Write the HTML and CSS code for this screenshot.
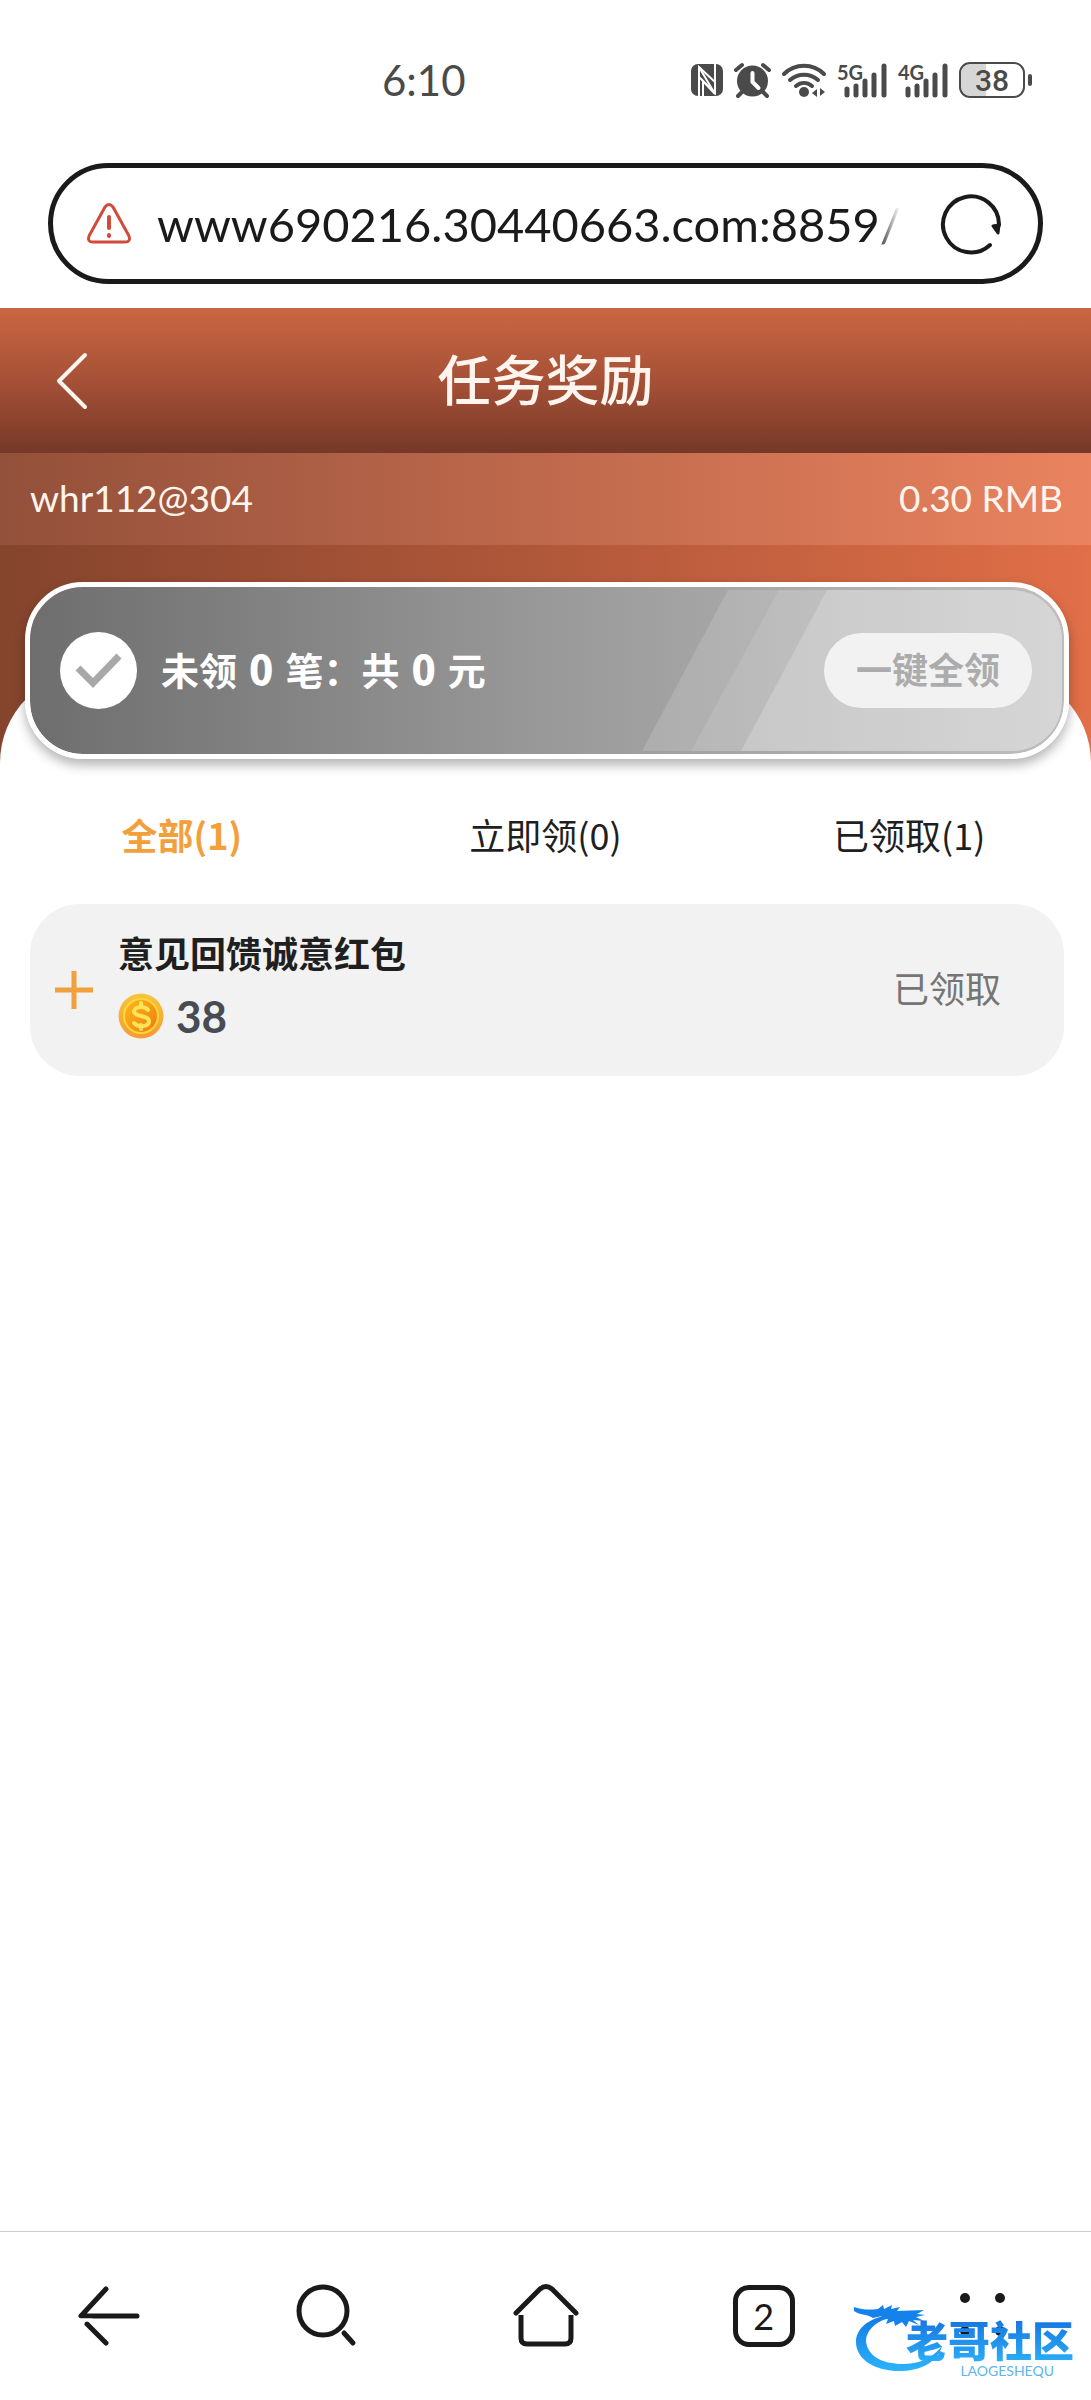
FILE: index.html
```html
<!DOCTYPE html>
<html lang="zh-CN">
<head>
    <meta charset="UTF-8">
    <meta name="viewport" content="width=device-width, initial-scale=1.0">
    <title>任务奖励</title>
    <link rel="stylesheet" href="styles.css">
</head>
<body>
    <div class="status-bar">
        <span class="clock">6:10</span>
        <div class="status-icons">
            <svg width="32" height="36" viewBox="0 0 32 36">
                <rect x="0" y="2" width="32" height="32" rx="7" fill="#4a4a4a"/>
                <path d="M8 34V5l16 15M24 2v29L8 15" fill="none" stroke="#fff" stroke-width="2"/>
                <path d="M8 5l16 27M12 34V19l12 13" fill="none" stroke="#fff" stroke-width="2"/>
            </svg>
            <svg width="37" height="36" viewBox="0 0 37 36">
                <circle cx="18.5" cy="19" r="15.5" fill="#4a4a4a"/>
                <path d="M2 8l6-5M35 8l-6-5M8 30l-4 4M29 30l4 4" stroke="#4a4a4a" stroke-width="4" stroke-linecap="round"/>
                <path d="M18.5 11v9l6 6" fill="none" stroke="#fff" stroke-width="4" stroke-linecap="round"/>
            </svg>
            <svg width="44" height="36" viewBox="0 0 44 36">
                <g fill="none" stroke="#4a4a4a" stroke-width="4" stroke-linecap="round">
                    <path d="M2 12C13 1 31 1 42 12"/>
                    <path d="M8 18c8-7 20-7 28 0"/>
                    <path d="M14 24c5-4 11-4 16 0"/>
                </g>
                <circle cx="22" cy="30" r="5" fill="#4a4a4a"/>
                <path d="M35 27v8l-5-4zM38 26v8l5-4z" fill="#4a4a4a"/>
            </svg>
            <svg width="50" height="36" viewBox="0 0 50 36">
                <text x="0" y="18" class="net-label">5G</text>
                <path d="M10 27v6M19 24v9M28 19v14M37 13v20M47 4v29" stroke="#4a4a4a" stroke-width="5" stroke-linecap="round"/>
            </svg>
            <svg width="50" height="36" viewBox="0 0 50 36">
                <text x="0" y="18" class="net-label">4G</text>
                <path d="M10 27v6M19 24v9M28 19v14M37 13v20M47 4v29" stroke="#4a4a4a" stroke-width="5" stroke-linecap="round"/>
            </svg>
            <svg width="74" height="36" viewBox="0 0 74 36">
                <path d="M27 2H12A10 10 0 0 0 2 12v12a10 10 0 0 0 10 10h15z" fill="#d6d6d6"/>
                <rect x="1" y="1" width="64" height="34" rx="10" fill="none" stroke="#4a4a4a" stroke-width="2"/>
                <path d="M71 14v8" stroke="#4a4a4a" stroke-width="4" stroke-linecap="round"/>
                <text x="33" y="29" class="battery-label">38</text>
            </svg>
        </div>
    </div>

    <div class="address-bar">
        <svg width="44" height="42" viewBox="0 0 44 42" fill="none" stroke="#d24a3a" stroke-linecap="round">
            <path d="M18 4q4-5 8 0l16 29q2 6-4 6H6q-6 0-4-6z" stroke-width="3" stroke-linejoin="round"/>
            <path d="M22 14v11M22 32v1" stroke-width="4"/>
        </svg>
        <input type="text" class="address" aria-label="网址" value="www690216.30440663.com:8859/">
        <button class="reload" aria-label="刷新">
            <svg width="60" height="60" viewBox="0 0 60 60" fill="none" stroke="#1a1a1a" stroke-width="4" stroke-linecap="round" stroke-linejoin="round">
                <path d="M48 51A28 28 0 1 1 57 31"/>
                <path d="M51 32l5 7 1-8z" stroke-width="3" fill="#1a1a1a"/>
            </svg>
        </button>
    </div>

    <header class="title-bar">
        <button class="back" aria-label="返回">
            <svg width="32" height="56" viewBox="0 0 32 56" fill="none" stroke="#fff5ee" stroke-width="4" stroke-linecap="round" stroke-linejoin="round">
                <path d="M29 2L3 28l26 26"/>
            </svg>
        </button>
        <h1>任务奖励</h1>
    </header>

    <div class="account">
        <span>whr112@304</span>
        <span>0.30 RMB</span>
    </div>

    <main>
        <div class="claim">
            <svg class="claim-shine" width="420" height="161" viewBox="0 0 420 161" fill="#fff">
                <path d="M86 0H420V161H0z" opacity=".14"/>
                <path d="M137 0H420V161H49z" opacity=".1"/>
                <path d="M185 0H420V161H99z" opacity=".2"/>
            </svg>
            <svg class="claim-check" width="77" height="77" viewBox="0 0 77 77">
                <circle cx="38.5" cy="38.5" r="38.5" fill="#fff"/>
                <path d="M18 36l15 15 26-27" fill="none" stroke="#a8a8a8" stroke-width="7"/>
            </svg>
            <p class="claim-text">未领<b>0</b>笔：共<b>0</b>元</p>
            <button class="claim-all">一键全领</button>
        </div>

        <nav class="tabs">
            <button class="tab active">全部(1)</button>
            <button class="tab">立即领(0)</button>
            <button class="tab">已领取(1)</button>
        </nav>

        <ul class="reward-list">
            <li class="reward">
                <button class="expand" aria-label="展开">
                    <svg width="38" height="38" viewBox="0 0 38 38" stroke="#f0a03c" stroke-width="5">
                        <path d="M19 0v38M0 19h38"/>
                    </svg>
                </button>
                <div class="reward-info">
                    <h2>意见回馈诚意红包</h2>
                    <div class="amount">
                        <svg width="46" height="46" viewBox="0 0 46 46">
                            <defs>
                                <linearGradient id="coinRim" x1="0" y1="0" x2="0" y2="1">
                                    <stop offset="0" stop-color="#f5c63c"/>
                                    <stop offset="1" stop-color="#f79a33"/>
                                </linearGradient>
                                <linearGradient id="coinFace" x1="0" y1="0" x2="1" y2="1">
                                    <stop offset="0" stop-color="#fdb91c"/>
                                    <stop offset="1" stop-color="#ef7a10"/>
                                </linearGradient>
                            </defs>
                            <circle cx="23" cy="23" r="22.5" fill="url(#coinRim)"/>
                            <circle cx="23" cy="23" r="17" fill="url(#coinFace)" stroke="#ffd63a" stroke-width="2"/>
                            <path d="M30 17c-3-4-13-4-14 1-1 6 15 4 15 10 0 6-11 7-15 2M23 10v4M23 32v4" fill="none" stroke="#ffe456" stroke-width="4" stroke-linecap="round"/>
                        </svg>
                        <span>38</span>
                    </div>
                </div>
                <span class="reward-state">已领取</span>
            </li>
        </ul>
    </main>

    <nav class="toolbar">
        <button aria-label="后退">
            <svg width="62" height="66" viewBox="0 0 62 66" fill="none" stroke="#1a1a1a" stroke-width="5" stroke-linecap="round" stroke-linejoin="round">
                <path d="M28 6L3 33h56M28 60L9 41"/>
                <path d="M0 37h14" stroke="#fff" stroke-width="3"/>
            </svg>
        </button>
        <button aria-label="搜索">
            <svg width="62" height="66" viewBox="0 0 62 66" fill="none" stroke="#1a1a1a" stroke-width="5" stroke-linecap="round">
                <circle cx="27" cy="28" r="24"/>
                <path d="M48 50l9 10"/>
            </svg>
        </button>
        <button aria-label="主页">
            <svg width="66" height="66" viewBox="0 0 66 66" fill="none" stroke="#1a1a1a" stroke-width="5" stroke-linecap="round" stroke-linejoin="round">
                <path d="M3 30L27 6q6-5 12 0l24 24"/>
                <path d="M8 32v23q0 6 6 6h38q6 0 6-6V32" stroke-linecap="butt"/>
            </svg>
        </button>
        <button aria-label="标签页"><span class="tab-count">2</span></button>
        <button aria-label="菜单">
            <svg width="66" height="66" viewBox="0 0 66 66" fill="#1a1a1a">
                <circle cx="16" cy="15" r="5"/>
                <circle cx="51" cy="15" r="5"/>
                <circle cx="16" cy="48" r="5"/>
                <circle cx="51" cy="48" r="5"/>
            </svg>
        </button>

        <div class="watermark">
            <svg class="dragon" width="90" height="70" viewBox="0 0 90 70">
                <defs>
                    <linearGradient id="wave" x1="0" y1="0" x2="0" y2="1">
                        <stop offset="0" stop-color="#1478e6"/>
                        <stop offset="1" stop-color="#2ab4fa"/>
                    </linearGradient>
                </defs>
                <path d="M30 12C12 16 2 26 2 38c0 18 20 30 47 29 20-1 35-10 39-25-10 13-24 18-39 18-22 0-36-9-37-23 0-10 8-18 22-23z" fill="url(#wave)"/>
                <path d="M0 3c9 3 16 3 24 2l5-4 1 4 8-4-1 4 9-2-3 4 27-1-7 4 8 1-9 2 8 4-11-1 6 5-10-4-3 6-4-5-7 4-1-5-8 3 2-5-10 1 4-4-9 2c-6-4-14-3-19-7z" fill="#1482ea"/>
            </svg>
            <div class="watermark-text">
                <span class="watermark-name">老哥社区</span>
                <span class="watermark-sub">LAOGESHEQU</span>
            </div>
        </div>
    </nav>
</body>
</html>
```

FILE: styles.css
```css
* {
    box-sizing: border-box;
}
body {
    display: flex;
    flex-direction: column;
    min-height: 100vh;
    margin: 0;
    background-color: #fff;
    color: #1f1f1f;
    font-family: Lato, "Noto Sans CJK SC", sans-serif;
    font-size: 36px;
    line-height: 52px;
}
h1, h2, p, ul {
    margin: 0;
    padding: 0;
}
button {
    padding: 0;
    border: none;
    background: none;
    color: inherit;
    font: inherit;
}
svg {
    display: block;
    flex: none;
    overflow: visible;
}

/* phone status bar */
.status-bar {
    display: flex;
    justify-content: space-between;
    align-items: center;
    height: 160px;
    padding: 0 58px 0 382px;
    color: #4a4a4a;
}
.clock {
    font-size: 42px;
}
.status-icons {
    display: flex;
    gap: 11px;
}
.net-label {
    fill: #4a4a4a;
    font-size: 20px;
    font-weight: bold;
}
.battery-label {
    fill: #4a4a4a;
    font-family: Roboto, sans-serif;
    font-size: 30px;
    font-weight: 500;
    text-anchor: middle;
}

/* address bar */
.address-bar {
    display: flex;
    align-items: center;
    height: 121px;
    margin: 3px 48px 24px;
    padding: 0 36px 0 34px;
    border: 5px solid #1a1a1a;
    border-radius: 61px;
}
.address {
    flex: 1;
    min-width: 0;
    margin: 0 42px 0 26px;
    padding: 0;
    border: none;
    outline: none;
    background: none;
    color: #1a1a1a;
    font-family: inherit;
    font-size: 47px;
    -webkit-mask-image: linear-gradient(to left, transparent, #000 24px);
    mask-image: linear-gradient(to left, transparent, #000 24px);
}

/* page header */
.title-bar {
    display: grid;
    grid-template-columns: 144px 1fr 144px;
    align-items: center;
    height: 145px;
    background: linear-gradient(#ca6642, #a65137 50%, #763828);
    color: #fff5ee;
}
.title-bar h1 {
    text-align: center;
    font-size: 54px;
    font-weight: 500;
}
.back {
    justify-self: center;
}
.account {
    display: flex;
    justify-content: space-between;
    align-items: center;
    height: 92px;
    padding: 0 28px 2px 30px;
    background: linear-gradient(to right, #93503a, #bf694c 50%, #ea835f);
    color: #fff5ee;
    font-size: 37px;
}

/* content */
main {
    flex: 1;
    padding-top: 37px;
    background: linear-gradient(to right, #85442d, #b1583a 50%, #e16f48) top / 100% 222px no-repeat;
    position: relative;
    z-index: 0;
}
main::before {
    content: "";
    position: absolute;
    z-index: -1;
    inset: 126px 0 0;
    border-radius: 92px 92px 0 0;
    background-color: #fff;
}
.claim {
    position: relative;
    display: flex;
    align-items: center;
    height: 177px;
    margin: 0 22px 0 25px;
    padding: 0 32px 0 30px;
    border: 5px solid #fff;
    border-radius: 58px;
    background: linear-gradient(to right, #6e6e6e, #999 50%, #bebebe) padding-box;
    box-shadow: 0 6px 12px rgba(0, 0, 0, 0.3);
    color: #fff;
}
.claim-shine {
    position: absolute;
    top: 3px;
    right: 2px;
    border-radius: 0 50px 50px 0;
    overflow: hidden;
}
.claim-check {
    margin-right: 24px;
}
.claim-text {
    flex: 1;
    padding-bottom: 4px;
    font-family: "Noto Sans CJK SC", sans-serif;
    font-size: 38px;
    font-weight: bold;
}
.claim-text b {
    margin: 0 12px;
    font-size: 40px;
}
.claim-all {
    position: relative;
    height: 75px;
    padding: 0 32px 2px;
    border-radius: 38px;
    background-color: #f2f2f2;
    color: #acacac;
    font-weight: bold;
}

.tabs {
    display: flex;
    padding: 49px 0 44px;
    font-family: "Noto Sans CJK SC", sans-serif;
}
.tab {
    flex: 1;
}
.tab.active {
    color: #f3a03c;
    font-weight: bold;
}

.reward-list {
    margin: 0 27px 0 30px;
    list-style-type: none;
}
.reward {
    display: flex;
    align-items: center;
    gap: 25px;
    padding: 24px 63px 24px 25px;
    border-radius: 50px;
    background-color: #f2f2f2;
}
.reward-info {
    flex: 1;
}
.reward-info h2 {
    font-size: 36px;
    font-weight: bold;
}
.amount {
    display: flex;
    align-items: center;
    gap: 12px;
    padding: 10px 0;
    color: #474b54;
    font-size: 44px;
    font-weight: bold;
}
.reward-state {
    padding-bottom: 2px;
    color: #757575;
}

/* browser toolbar */
.toolbar {
    position: relative;
    display: flex;
    height: 169px;
    border-top: 1px solid #ccc;
}
.toolbar button {
    flex: 1;
    display: flex;
    justify-content: center;
    align-items: center;
}
.tab-count {
    width: 62px;
    height: 62px;
    border: 5px solid #1a1a1a;
    border-radius: 16px;
    color: #1a1a1a;
}
.watermark {
    position: absolute;
    right: 17px;
    bottom: 24px;
    height: 72px;
}
.dragon {
    position: absolute;
    right: 130px;
    top: 0;
}
.watermark-text {
    position: relative;
    display: flex;
    flex-direction: column;
    padding-top: 14px;
}
.watermark-name {
    background: linear-gradient(#1673e0, #2bb0f8) text;
    color: transparent;
    font-size: 42px;
    font-weight: 900;
    line-height: 46px;
}
.watermark-sub {
    align-self: flex-end;
    margin-right: 20px;
    color: #5fb4ee;
    font-size: 14px;
    line-height: 14px;
}
```
